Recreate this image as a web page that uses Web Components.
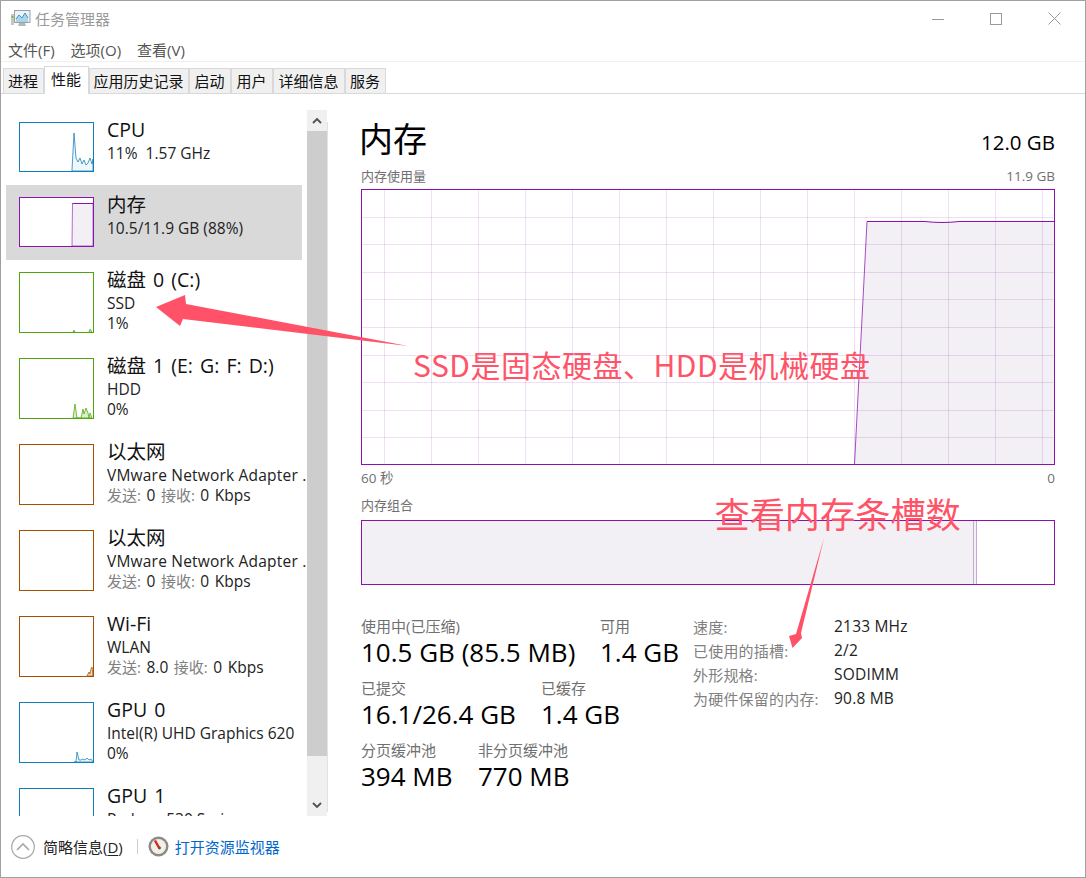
<!DOCTYPE html>
<html lang="zh">
<head>
<meta charset="utf-8">
<title>任务管理器</title>
<style>
html,body{margin:0;padding:0;background:#fff}
body{font-family:"Open Sans","Noto Sans CJK SC",sans-serif;color:#111}
.g{color:#808080;font-size:15px}
.vm{letter-spacing:.2px}
.net{word-spacing:1.5px}
</style>
</head>
<body>
<tm-app>
  <tm-titlebar slot="title">任务管理器</tm-titlebar>
  <tm-menubar slot="menu"><span>文件(F)</span><span>选项(O)</span><span>查看(V)</span></tm-menubar>
  <tm-tabs slot="tabs">
    <tm-tab w="41">进程</tm-tab><tm-tab w="45" active>性能</tm-tab><tm-tab w="100">应用历史记录</tm-tab><tm-tab w="42">启动</tm-tab><tm-tab w="42">用户</tm-tab><tm-tab w="72">详细信息</tm-tab><tm-tab w="41">服务</tm-tab>
  </tm-tabs>
  <tm-sidebar slot="side">
    <tm-perf-item name="CPU" color="#117dbb" th="50" fill="#f1f6fa" spark="53,49 53,48 55,11 57,36 59,40 61,36 63,42 65,38 67,43 69,41 71,36 73,42 74,37 74,49"><div>11%&nbsp; 1.57 GHz</div></tm-perf-item>
    <tm-perf-item name="内存" color="#8b12ae" th="50" fill="#f2f0f4" selected spark="53,49 53.5,6.5 74,6.5 74,49" top="M53.5 6.5H74"><div>10.5/11.9 GB (88%)</div></tm-perf-item>
    <tm-perf-item name="磁盘 0 (C:)" color="#4da60c" th="61" fill="#eff7e8" spark="54,60 55,58 56,60 M70,60 71,57 73,60"><div>SSD</div><div>1%</div></tm-perf-item>
    <tm-perf-item name="磁盘 1 (E: G: F: D:)" color="#4da60c" th="61" fill="#dcefcd" spark="54,60 56,46 58,60 62,60 64,51 65,56 67,50 69,55 70,60 71,55 73,60"><div>HDD</div><div>0%</div></tm-perf-item>
    <tm-perf-item name="以太网" color="#a74f01" th="61"><div class="vm">VMware Network Adapter .</div><div class="net"><span class="g">发送:</span> 0 <span class="g">接收:</span> 0 Kbps</div></tm-perf-item>
    <tm-perf-item name="以太网" color="#a74f01" th="61"><div class="vm">VMware Network Adapter .</div><div class="net"><span class="g">发送:</span> 0 <span class="g">接收:</span> 0 Kbps</div></tm-perf-item>
    <tm-perf-item name="Wi-Fi" color="#a74f01" th="61" fill="#f2dcc8" spark="68,60 70,56 71,58 72,53 73,51 74,60"><div>WLAN</div><div class="net"><span class="g">发送:</span> 8.0 <span class="g">接收:</span> 0 Kbps</div></tm-perf-item>
    <tm-perf-item name="GPU 0" color="#117dbb" th="61" fill="#f1f6fa" spark="55,60 57,60 58,50 60,58 62,58 64,57 66,58 68,56 70,58 72,57 74,60"><div>Intel(R) UHD Graphics 620</div><div>0%</div></tm-perf-item>
    <tm-perf-item name="GPU 1" color="#117dbb" th="61"><div>Radeon 530 Series</div></tm-perf-item>
  </tm-sidebar>
  <tm-memory slot="main">
    <tm-stat-row>
      <tm-stat label="使用中(已压缩)" w="239">10.5 GB (85.5 MB)</tm-stat>
      <tm-stat label="可用">1.4 GB</tm-stat>
    </tm-stat-row>
    <tm-stat-row>
      <tm-stat label="已提交" w="180">16.1/26.4 GB</tm-stat>
      <tm-stat label="已缓存">1.4 GB</tm-stat>
    </tm-stat-row>
    <tm-stat-row>
      <tm-stat label="分页缓冲池" w="117">394 MB</tm-stat>
      <tm-stat label="非分页缓冲池">770 MB</tm-stat>
    </tm-stat-row>
    <tm-details slot="details">
      <span class="g">速度:</span><span>2133 MHz</span>
      <span class="g">已使用的插槽:</span><span>2/2</span>
      <span class="g">外形规格:</span><span>SODIMM</span>
      <span class="g">为硬件保留的内存:</span><span>90.8 MB</span>
    </tm-details>
  </tm-memory>
  <tm-footer slot="foot"></tm-footer>
  <tm-annotations slot="over"></tm-annotations>
</tm-app>
<script>
function shadow(el, html){
  const r = el.attachShadow({mode:'open'});
  r.innerHTML = html;
  return r;
}
customElements.define('tm-app', class extends HTMLElement{
  constructor(){super();shadow(this,`<style>
    :host{display:flex;flex-direction:column;position:relative;box-sizing:border-box;width:1086px;height:878px;border:1px solid #a0a0a0;background:#fff;overflow:hidden}
    .body{display:flex;flex:1;min-height:0}
  </style>
  <slot name="title"></slot><slot name="menu"></slot><slot name="tabs"></slot>
  <div class="body"><slot name="side"></slot><slot name="main"></slot></div>
  <slot name="foot"></slot><slot name="over"></slot>`);}
});
customElements.define('tm-titlebar', class extends HTMLElement{
  constructor(){super();shadow(this,`<style>
    :host{display:flex;align-items:center;box-sizing:border-box;height:37px;flex:none;padding:0 0 2px 10px;color:#9a9a9a;font-size:15px}
    svg.i{margin-right:4px;flex:none}
    .t{flex:1}
    .b{width:58px;display:flex;justify-content:center;align-items:center}
    .c{display:flex;margin-right:2px}
  </style>
  <svg class="i" width="20" height="18" viewBox="0 0 20 18"><rect x="3.5" y="0.5" width="15.5" height="12" fill="#eaf3f8" stroke="#9aa0a4"/><path d="M5 9 8 5l3 3 3-5 3 5v4H5z" fill="#a9d4ee"/><path d="M5 9 8 5l3 3 3-5 3 5" fill="none" stroke="#4d8fbd"/><rect x="0" y="4" width="3" height="11" fill="#c4c8c4"/><rect x="0.5" y="6" width="2" height="2" fill="#6cc04a"/><path d="M8 13h6l1 3H7z" fill="#b4b8bb"/></svg>
  <span class="t"><slot></slot></span>
  <span class="c">
  <span class="b"><svg width="12" height="12"><path d="M0 6.5h12" stroke="#999"/></svg></span>
  <span class="b"><svg width="12" height="12"><rect x=".5" y=".5" width="11" height="11" fill="none" stroke="#999"/></svg></span>
  <span class="b"><svg width="13" height="13"><path d="M.5.5l12 12M12.5.5l-12 12" stroke="#999"/></svg></span>
  </span>`);}
});
customElements.define('tm-menubar', class extends HTMLElement{
  constructor(){super();shadow(this,`<style>
    :host{display:flex;flex:none;gap:16px;align-items:center;height:23px;padding-left:7px;border-bottom:1px solid #f0f0f0;font-size:15px;color:#555}
  </style><slot></slot>`);}
});
customElements.define('tm-tabs', class extends HTMLElement{
  constructor(){super();shadow(this,`<style>
    :host{display:flex;flex:none;align-items:flex-end;height:31px;padding-left:2px;border-bottom:1px solid #d9d9d9}
  </style><slot></slot>`);}
});
customElements.define('tm-tab', class extends HTMLElement{
  constructor(){super();const w=this.getAttribute('w');const a=this.hasAttribute('active');shadow(this,`<style>
    :host{display:flex;box-sizing:border-box;align-items:center;justify-content:center;width:${w}px;height:${a?28:25}px;font-size:15px;color:#111;padding:0 1px ${a?4:2}px 0;
      background:${a?'#fff':'#f0f0f0'};border:1px solid #d9d9d9;border-bottom:0;${a?'margin-bottom:-1px;position:relative;':''}}
  </style><slot></slot>`);}
});
customElements.define('tm-sidebar', class extends HTMLElement{
  constructor(){super();shadow(this,`<style>
    :host{display:flex;flex:none;box-sizing:border-box;width:327px;padding-top:16px;height:100%}
    .list{flex:none;width:306px;overflow:hidden;box-sizing:border-box;padding-left:5px}
    .sb{flex:none;width:20px;display:flex;flex-direction:column;background:#f0f0f0;position:relative}
    .sb::after{content:"";position:absolute;left:20px;top:12px;bottom:4px;width:1px;background:#e2e2e2}
    .btn{height:21px;flex:none;display:flex;align-items:center;justify-content:center}
    .th{height:625px;background:#cdcdcd;flex:none}
    .sp{flex:1}
  </style>
  <div class="list"><slot></slot></div>
  <div class="sb">
    <div class="btn"><svg width="10" height="7"><path d="M1 6l4-4 4 4" fill="none" stroke="#505050" stroke-width="1.8"/></svg></div>
    <div class="th"></div><div class="sp"></div>
    <div class="btn"><svg width="10" height="7"><path d="M1 1l4 4 4-4" fill="none" stroke="#505050" stroke-width="1.8"/></svg></div>
  </div>`);}
});
customElements.define('tm-perf-item', class extends HTMLElement{
  constructor(){super();
    const c=this.getAttribute('color'),h=+this.getAttribute('th'),sel=this.hasAttribute('selected');
    const sp=this.getAttribute('spark'),fill=this.getAttribute('fill')||'none',top=this.getAttribute('top');
    let sv='';
    if(sp){ sp.split('M').forEach(s=>{sv+=`<polygon points="${s.trim()}" fill="${fill}" stroke="${c}" stroke-width="1" stroke-opacity="${top?.6:.75}"/>`;}); }
    if(top){ sv+=`<path d="${top}" fill="none" stroke="${c}"/>`; }
    shadow(this,`<style>
    :host{display:flex;box-sizing:border-box;width:296px;padding:12px 0 0 13px;height:${h==50?75:86}px;background:${sel?'#d9d9d9':'transparent'}}
    .tb{flex:none;width:75px;height:${h}px;background:#fff;display:block}
    .x{margin-left:13px;margin-top:-5px;min-width:0;flex:1;white-space:nowrap;overflow:hidden;margin-right:-5px;font-size:15.5px;line-height:20px;color:#222}
    .n{font-size:19.5px;line-height:26px;word-spacing:2px;color:#111}
  </style>
  <svg class="tb" viewBox="0 0 75 ${h}" width="75" height="${h}">${sv}<rect x=".5" y=".5" width="74" height="${h-1}" fill="none" stroke="${c}"/></svg>
  <div class="x"><div class="n">${this.getAttribute('name')}</div><slot></slot></div>`);}
});
customElements.define('tm-memory', class extends HTMLElement{
  constructor(){super();
    let g='';
    for(let i=1;i<10;i++){const y=Math.round(i*27.6)+.5;g+=`<path d="M1 ${y}H692.5"/>`;}
    for(let i=0;i<15;i++){const x=23.5+47*i;g+=`<path d="M${x} 1V275"/>`;}
    shadow(this,`<style>
    :host{display:block;flex:1;box-sizing:border-box;padding:20px 30px 0 33px;min-width:0}
    .hd{display:flex;justify-content:space-between;align-items:center;height:50px}
    h1{margin:0;font-weight:400;font-size:34px;line-height:50px;color:#000;margin-left:-2px}
    .tot{font-size:20.5px;color:#000;padding-top:6px}
    .cap{display:flex;justify-content:space-between;font-size:13px;line-height:18px;color:#707070}
    .cap .la{font-size:13.5px}
    .cap1{margin:3px 0 4px}
    svg{display:block}
    .low{display:flex;gap:0}
    .stats{flex:none;width:332px;margin-top:1px}
    .det{margin-top:-1px}
    .cap2{margin-top:4px;height:18px}
    .cap3{margin-top:9px;height:18px;margin-bottom:6px}
  </style>
  <div class="hd"><h1>内存</h1><span class="tot">12.0 GB</span></div>
  <div class="cap cap1"><span>内存使用量</span><span class="la">11.9 GB</span></div>
  <svg width="694" height="276" viewBox="0 0 694 276">
    <polygon points="493.5,275 506,32.5 693,32.5 693,275" fill="#f2f0f4"/>
    <g stroke="#8b12ae" stroke-opacity=".14" fill="none">${g}</g>
    <path d="M493.5 275 506 32.5" fill="none" stroke="#8b12ae" stroke-opacity=".75"/>
    <path d="M506 32.5H564q8 1 17 1t17-1H693" fill="none" stroke="#8b12ae"/>
    <rect x=".5" y=".5" width="693" height="275" fill="none" stroke="#8b12ae"/>
  </svg>
  <div class="cap cap2"><span class="la">60 秒</span><span class="la">0</span></div>
  <div class="cap cap3"><span>内存组合</span></div>
  <svg width="694" height="65" viewBox="0 0 694 65">
    <rect x="0" y="0" width="615" height="65" fill="#f2f0f4"/>
    <path d="M612.5 1V64M615.5 1V64" stroke="#c9a8d8" fill="none"/>
    <rect x=".5" y=".5" width="693" height="64" fill="none" stroke="#8b12ae"/>
  </svg>
  <div style="height:30px"></div>
  <div class="low"><div class="stats"><slot></slot></div><div class="det"><slot name="details"></slot></div></div>`);}
});
customElements.define('tm-stat-row', class extends HTMLElement{
  constructor(){super();shadow(this,`<style>:host{display:flex;height:62px}</style><slot></slot>`);}
});
customElements.define('tm-stat', class extends HTMLElement{
  constructor(){super();const w=this.getAttribute('w');shadow(this,`<style>
    :host{display:block;flex:none;${w?`width:${w}px;`:''}white-space:nowrap}
    .l{font-size:15px;line-height:20px;color:#707070}
    .v{font-size:26px;line-height:32px;color:#000}
  </style><div class="l">${this.getAttribute('label')}</div><div class="v"><slot></slot></div>`);}
});
customElements.define('tm-details', class extends HTMLElement{
  constructor(){super();shadow(this,`<style>
    :host{display:grid;grid-template-columns:141px auto;grid-auto-rows:24px;align-items:center;font-size:15.5px;letter-spacing:.2px;color:#222}
  </style><slot></slot>`);}
});
customElements.define('tm-footer', class extends HTMLElement{
  constructor(){super();shadow(this,`<style>
    :host{display:flex;flex:none;align-items:center;height:61px;padding-left:10px;font-size:15px;color:#222;box-sizing:border-box}
    u{text-underline-offset:2px}
    .s{width:1px;height:15px;background:#ccc;margin:0 10px 0 14px}
    a{color:#0066cc;text-decoration:none;margin-left:6px}
    .m{margin-left:8px}
  </style>
  <svg width="24" height="24" viewBox="0 0 24 24"><circle cx="12" cy="12" r="11.3" fill="#fff" stroke="#a8a8a8" stroke-width="1.2"/><path d="M6 15l6-6 6 6" fill="none" stroke="#a8a8a8" stroke-width="1.6"/></svg>
  <span class="m">简略信息(<u>D</u>)</span><span class="s"></span>
  <svg width="21" height="21" viewBox="0 0 21 21"><circle cx="10.5" cy="10.5" r="10" fill="#8a8a86"/><circle cx="10.5" cy="10.5" r="7.6" fill="#f3efe6"/><path d="M7 4.5l4.5 8" stroke="#d4281c" stroke-width="2.4"/><circle cx="11.5" cy="12" r="1.4" fill="#555"/></svg>
  <a>打开资源监视器</a>`);}
});
customElements.define('tm-annotations', class extends HTMLElement{
  constructor(){super();shadow(this,`<style>
    :host{position:absolute;inset:-1px;pointer-events:none;display:block}
    svg{position:absolute;left:0;top:0}
    .a{position:absolute;color:#ff5468;white-space:nowrap;font-family:"Noto Sans CJK SC",sans-serif;line-height:1}
  </style>
  <svg width="1086" height="878"><g fill="#ff5268">
    <polygon points="156,307 185,295 186,304 408,346 183,319 180,326"/>
    <polygon points="824,538 801,633 802,638 792.5,648 789,636 796,634"/>
  </g></svg>
  <div class="a" style="left:413px;top:349px;font-size:30px;letter-spacing:.5px">SSD是固态硬盘、HDD是机械硬盘</div>
  <div class="a" style="left:714.5px;top:495px;font-size:35.2px">查看内存条槽数</div>`);}
});
</script>
</body>
</html>
